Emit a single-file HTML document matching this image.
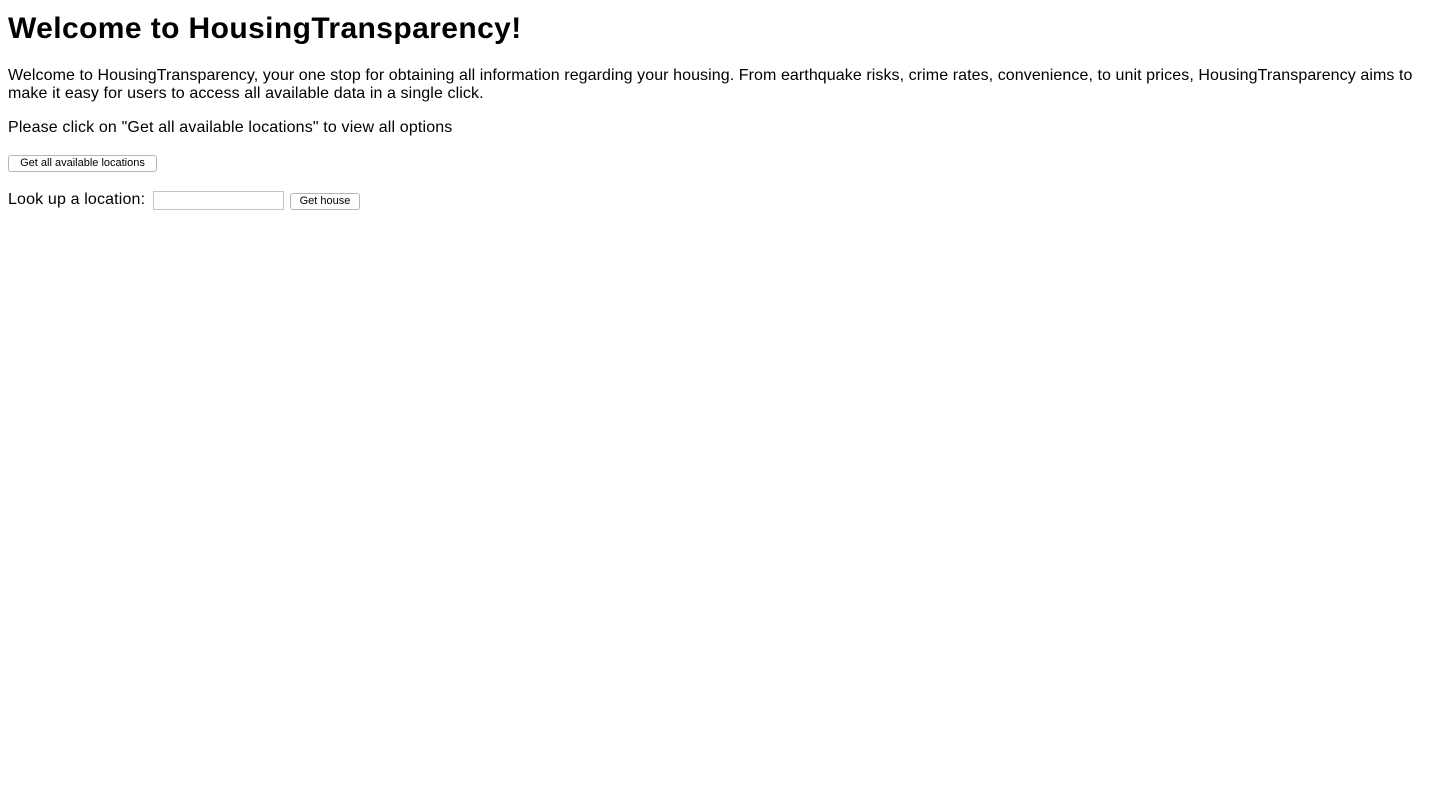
<!DOCTYPE html>
<html><head><meta charset="utf-8"><style>
body{margin:0;background:#fff;font-family:"Liberation Sans",sans-serif;color:#000;}
.a{position:absolute;left:8px;white-space:nowrap;}
h1{position:absolute;left:8px;top:11px;margin:0;font-size:30px;font-weight:bold;line-height:36px;letter-spacing:0.4px;}
.p{font-size:16px;line-height:18px;letter-spacing:0.15px;}
button{position:absolute;font-family:"Liberation Sans",sans-serif;font-size:11px;background:#fff;border:1px solid #b5b5b5;border-radius:3px;padding:0;height:17px;line-height:15px;color:#000;}
input{position:absolute;left:153px;top:191px;width:129px;height:17px;border:1px solid #c5c5c5;padding:0;margin:0;box-sizing:content-box;}
</style></head><body>
<h1>Welcome to HousingTransparency!</h1>
<div class="a p" style="top:67px;letter-spacing:0.08px;">Welcome to HousingTransparency, your one stop for obtaining all information regarding your housing. From earthquake risks, crime rates, convenience, to unit prices, HousingTransparency aims to</div>
<div class="a p" style="top:85px;letter-spacing:0.1px;">make it easy for users to access all available data in a single click.</div>
<div class="a p" style="top:119px;">Please click on "Get all available locations" to view all options</div>
<button style="left:8px;top:155px;width:149px;">Get all available locations</button>
<div class="a p" style="top:191px;">Look up a location:</div>
<input type="text">
<button style="left:290px;top:193px;width:70px;">Get house</button>
</body></html>
